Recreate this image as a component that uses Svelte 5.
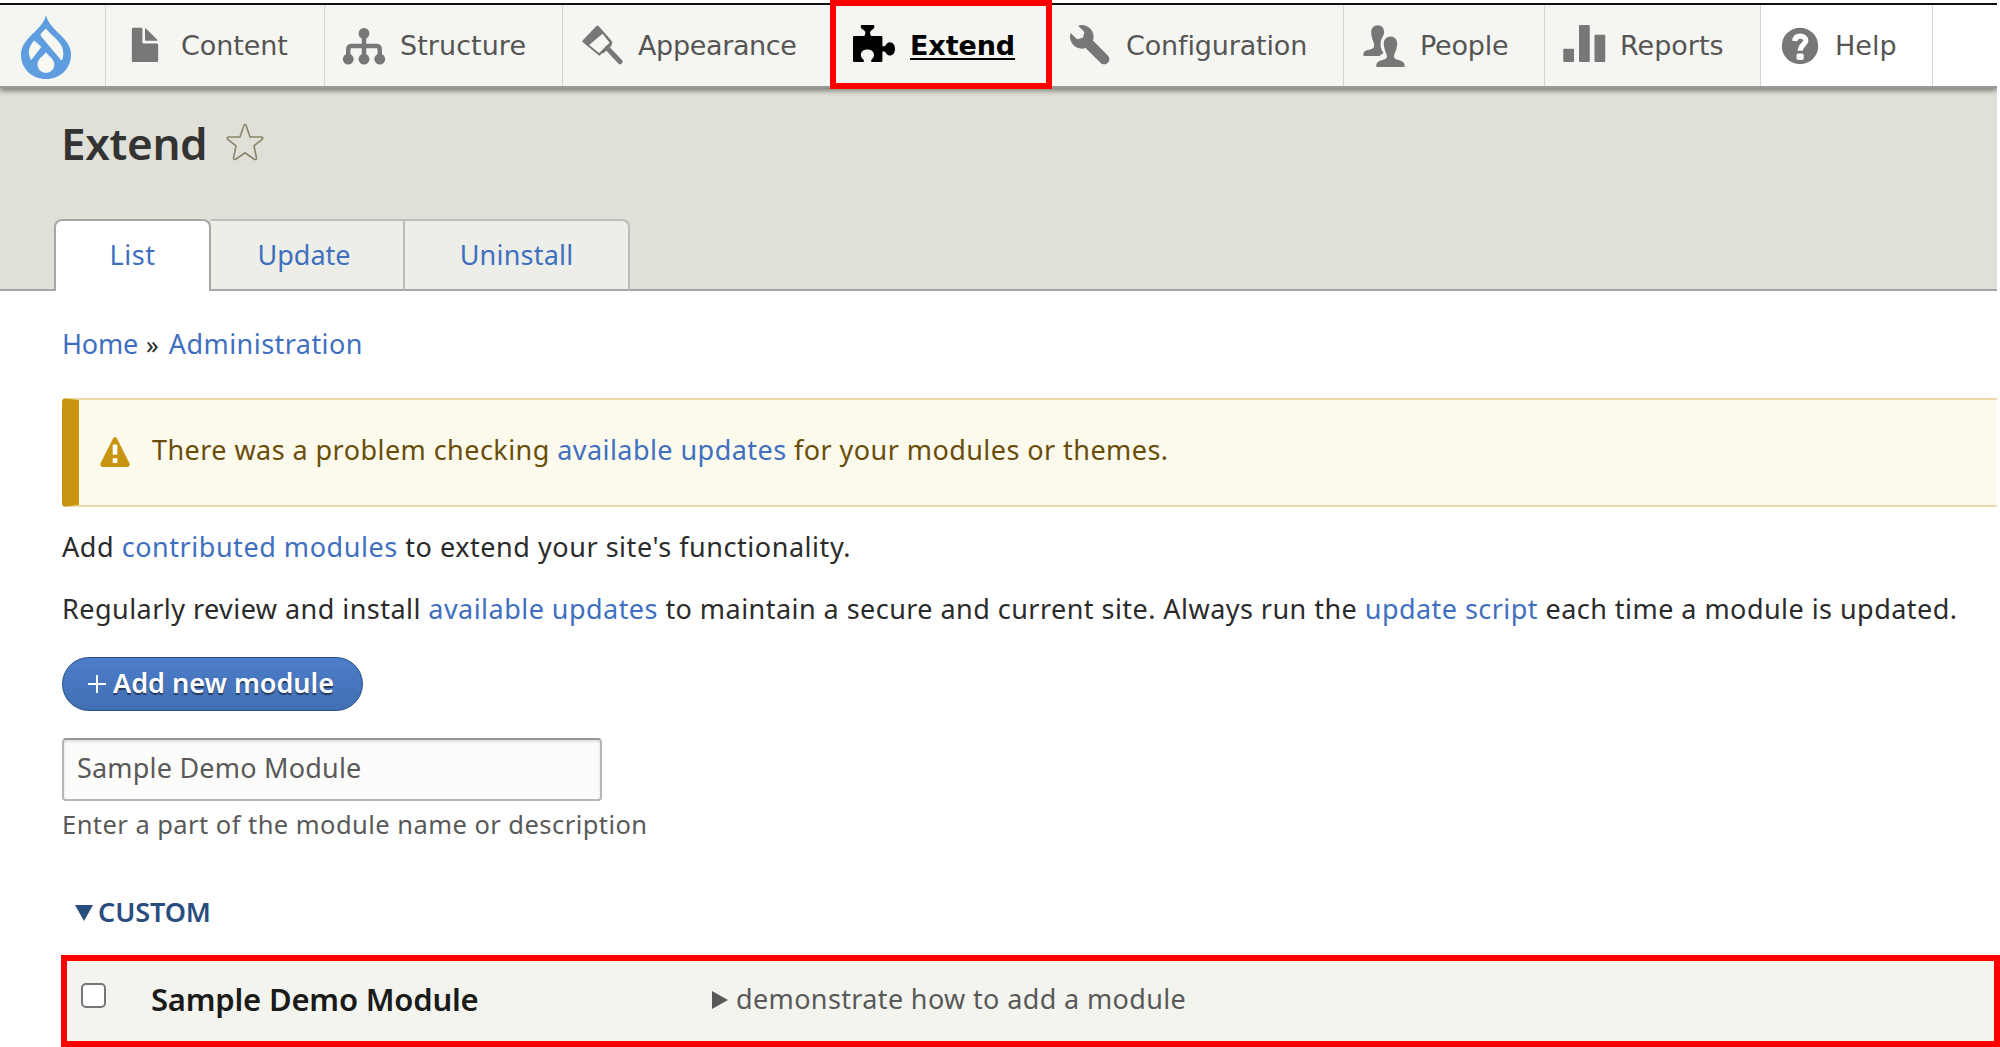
<script>
  const menu = [
    { id: 'content', label: 'Content' },
    { id: 'structure', label: 'Structure' },
    { id: 'appearance', label: 'Appearance' },
    { id: 'extend', label: 'Extend' },
    { id: 'config', label: 'Configuration' },
    { id: 'people', label: 'People' },
    { id: 'reports', label: 'Reports' },
    { id: 'help', label: 'Help' }
  ];
  let filter = $state('Sample Demo Module');
</script>

{#snippet icon(id)}
  <svg class="icon" viewBox="0 0 16 16">
    {#if id === 'content'}
      <path d="M12.502 7h-5c-.276 0-.502-.225-.502-.5v-5c0-.275-.225-.5-.5-.5h-3c-.275 0-.5.225-.5.5v12.1c0 .275.225.5.5.5h9c.275 0 .5-.225.5-.5v-6.1c0-.275-.225-.5-.498-.5zM8.502 6h4c.275 0 .34-.159.146-.354l-4.293-4.292c-.195-.195-.353-.129-.353.146v4c-.001.275.224.5.5.5z" />
    {:else if id === 'structure'}
      <circle cx="8" cy="3.2" r="2.05" />
      <circle cx="2" cy="13" r="2.05" /><circle cx="8" cy="13" r="2.05" /><circle cx="14" cy="13" r="2.05" />
      <path class="line" d="M8 4v9M2 13V9.300Q2 8 3.300 8h9.400Q14 8 14 9.300V13" />
    {:else if id === 'appearance'}
      <path fill-rule="evenodd" d="M5.900.4q.4-.4.8 0L11.700 6.100q.4.500.1 1.100L11.500 8 8.700 10.700l-.8.2-.6.600q-.3.200-.6 0L.6 6.500q-.3-.3 0-.6zM8.200 3.300 3.100 7.600l3.800 3.100 4-3.900z" />
      <path class="line" d="M10 8.800 14.900 14" />
    {:else if id === 'extend'}
      <path d="M3.300 0h4.500q.5.200.3.900C8 1.800 6.700 1.900 6.500 2.900q0 1 .5 1.300h3.700q.5 0 .5.500v3.400h.9c.4-.1.600-1.400 1.800-1.500 1.400 0 2.100 1.100 2.100 2.500s-.7 2.500-2.100 2.500c-1.200-.1-1.400-1.400-1.900-1.500h-.8v3.500q0 .500-.5.500H7.300q-.5 0-.4-.5c.1-.7 1.100-1 1.100-2.200 0-1.300-1-2.100-2.500-2.100S3 10.100 3 11.400c0 1.200 1.100 1.500 1.200 2.200q0 .500-.5.500H.5q-.5 0-.5-.5V4.700q0-.5.500-.5h3.700q.5-.3.500-1.300C4.600 1.900 3.200 1.800 3 .9 2.900.2 3 .1 3.300 0z" />
    {:else if id === 'config'}
      <path d="M14.416 11.586l-.01-.009-5.656-5.656c.15-.449.252-.921.252-1.421 0-2.485-2.016-4.500-4.502-4.500-.505 0-.981.102-1.434.255l2.431 2.431-.588 2.196-2.196.588-2.445-2.445c-.162.464-.268.956-.268 1.475 0 2.486 2.014 4.500 4.500 4.500.5 0 .972-.102 1.421-.251l5.667 5.665c.781.781 2.047.781 2.828 0s.781-2.047 0-2.828z" />
    {:else if id === 'people'}
      <path d="M6 .1c1.500 0 2.400 1.100 2.400 2.500 0 .8-.1 1.100-.4 1.600-.6 1-1 2.200-.9 3.500 0 1 .3 1.800.9 2.600q.3.600-.3.800l-.8.2.1.500H.9q-.5 0-.4-.6C.6 9.200 3.500 9.700 4.300 8.800 5.400 7.500 3.500 5.700 3.500 2.800 3.500 1.200 4.500.1 6 .1z" />
      <path d="M10.900 4.400c1.500 0 2.500 1.100 2.500 2.700 0 2.800-1.800 4.300-1 5.500.6 1 3.800.6 3.900 2.900q0 .5-.5.500H5.900q-.5 0-.5-.5c.1-2.300 3.300-1.900 3.900-2.900.8-1.200-1-2.700-1-5.500 0-1.600 1.100-2.700 2.600-2.700z" />
    {:else if id === 'reports'}
      <rect x=".1" y="9" width="4.100" height="5.100" rx=".4" />
      <rect x="6.100" y="0" width="4.100" height="14.100" rx=".4" />
      <rect x="12" y="3.700" width="4.100" height="10.400" rx=".4" />
    {:else}
      <circle cx="8" cy="8" r="6.950" />
      <path class="mark" d="M6 6.100C6.100 4.800 7 4.200 8.100 4.200S10.200 4.900 10.200 6 8.100 7.800 8.100 9.800" />
      <rect class="dot" x="6.700" y="10.900" width="2.700" height="2.400" rx=".6" />
    {/if}
  </svg>
{/snippet}

<div class="page">
  <nav class="toolbar">
    <a class="home" href="#home" aria-label="Home">
      <svg viewBox="0 0 50 64">
        <path class="drop" d="M25 0C23.500 8 16 14.500 10 20.500 4 26.500 0 32 0 39.500 0 54 11 64 25 64s25-10 25-24.500c0-7.500-4-13-10-19C34 14.500 26.500 8 25 0z" />
        <path class="cut" d="M25.300 14Q24.800 13.400 24 14.200L20 18.600Q19.100 20 20 21.200L39.300 44.200Q41 46.200 41.500 44C43.300 38 42.500 32 37 26 33.500 22 29 18.500 25.300 14zM13.300 25.600 20.300 32 11.300 43.800Q10.200 45.700 9.300 43.500C6.500 37.500 8 31 13.300 25.600zM25 37.200C22 41.200 16.400 44 16.400 49.600a8.500 8.300 0 0 0 17 0C33.400 44 27.700 41.200 25 37.200z" />
      </svg>
    </a>
    {#each menu as item}
      <a class="item {item.id}" href="#{item.id}">{@render icon(item.id)}<span>{item.label}</span></a>
    {/each}
  </nav>

  <header>
    <div class="heading">
      <h1>Extend</h1>
      <svg class="star" viewBox="0 0 38 38"><path d="M19 1.500q.9 0 1.400 1.800L24 14h11.500q2.300.6.600 2.400L28 22.800l2.500 12q.1 2.500-2.200 1.400L19 29.800l-9.300 6.400q-2.300 1.100-2.200-1.400l2.500-12L1.900 16.400Q.2 14.600 2.500 14H14l3.600-10.700Q18.100 1.500 19 1.500z" /></svg>
    </div>
    <div class="tabs">
      <a class="tab active" href="#list">List</a>
      <a class="tab update" href="#update">Update</a>
      <a class="tab uninstall" href="#uninstall">Uninstall</a>
    </div>
  </header>

  <main>
    <div class="crumbs"><a href="#home">Home</a><i>»</i><a class="admin" href="#admin">Administration</a></div>

    <div class="warning">
      <svg viewBox="0 0 30 30"><path d="M15 0q1.200 0 2 1.500L29.300 26Q30.700 29.500 27.500 30h-25Q-.7 29.500.7 26L13 1.500Q13.800 0 15 0z" /><path class="bang" d="M12.700 7.500h4.600v10.200h-4.600zM12.700 21.200h4.600v4.800h-4.600z" /></svg>
      <p>There was a problem checking <a href="#updates">available updates</a> for your modules or themes.</p>
    </div>

    <p class="intro">Add <a href="#contrib">contributed modules</a> to extend your site's functionality.</p>
    <p class="review">Regularly review and install <a href="#updates">available updates</a> to maintain a secure and current site. Always run the <a href="#script">update script</a> each time a module is updated.</p>

    <a class="add" href="#add"><svg viewBox="0 0 20 20"><path d="M10 1v18M1 10h18" /></svg>Add new module</a>

    <input type="text" bind:value={filter} aria-label="Filter modules" />
    <p class="hint">Enter a part of the module name or description</p>

    <div class="group"><svg viewBox="0 0 18 16"><path d="M0 0h18L9 16z" /></svg>CUSTOM</div>

    <div class="module">
      <span class="check"></span>
      <strong>Sample Demo Module</strong>
      <svg viewBox="0 0 16 18"><path d="M0 0 16 9 0 18z" /></svg>
      <span class="desc">demonstrate how to add a module</span>
    </div>
  </main>
</div>

<style>
  :global(body) { background: #fff; overflow: hidden; }
  .page {
    width: 2000px; height: 1047px; padding-top: 3px; overflow: hidden; background: #fff;
    font: 27px/40px "Noto Sans", "Open Sans", sans-serif; color: #2b2b2b;
  }
  * { box-sizing: border-box; }
  a { color: #3f6fbf; text-decoration: none; }
  p { margin: 0; white-space: nowrap; }

  .toolbar {
    position: relative; display: flex; width: 1997px; height: 83px; z-index: 1;
    border-top: 2px solid #111; background: #fff;
    box-shadow: 0 2px 1px #999a97, 0 5px 5px rgba(0, 0, 0, .42);
    clip-path: inset(-3px 0 -20px 0);
  }
  .home {
    width: 106px; padding: 10px 0 0 21px; background: #f5f6f1; border-right: 1px solid #d5d6d6;
  }
  .home svg { display: block; width: 50px; height: 64px; }
  .drop { fill: #5e9ee0; }
  .cut { fill: #f8f8f3; }
  .item {
    display: flex; align-items: center; padding-left: 18px; gap: 15px;
    background: #f5f6f1; border-right: 1px solid #d5d6d6; color: #555;
    font: 27px/40px "DejaVu Sans", sans-serif; white-space: nowrap;
  }
  .icon { flex: none; width: 42px; height: 42px; fill: #777; overflow: visible; }
  .line { fill: none; stroke: #777; stroke-width: 1.9; stroke-linecap: round; }
  .structure .line { stroke-width: 1.7; }
  .mark { fill: none; stroke: #fff; stroke-width: 2; }
  .dot { fill: #fff; }
  .content { width: 219px; letter-spacing: -.1px; }
  .structure { width: 238px; letter-spacing: .05px; }
  .appearance { width: 268px; border-right: 0; letter-spacing: -.35px; }
  .extend {
    width: 222px; margin: -5px 0 -3px -1px; border: 6px solid #f00;
    color: #000; font-weight: bold; letter-spacing: -.1px;
  }
  .extend .icon { fill: #000; }
  .extend span { text-decoration: underline; text-decoration-thickness: 2px; text-underline-offset: 3px; }
  .config { width: 292px; gap: 14px; letter-spacing: -.15px; }
  .people { width: 201px; gap: 16px; letter-spacing: -.2px; }
  .reports { width: 216px; }
  .help { width: 172px; gap: 14px; background: #fff; }
  .extend.item { padding: 2px 0 0 17px; }

  header {
    display: flex; flex-direction: column; justify-content: space-between;
    width: 1997px; height: 205px; padding: 32px 0 0 54px;
    background: #e0e0d8; border-bottom: 2px solid #a6a6a6;
  }
  .heading { display: flex; align-items: center; gap: 19px; padding-left: 7px; height: 50px; }
  h1 { margin: 0; font-size: 44px; line-height: 50px; font-weight: 600; letter-spacing: -.35px; color: #333; }
  .star { width: 38px; height: 38px; margin-top: -2px; fill: none; stroke: #86866b; stroke-width: 1.600; }
  .tabs { display: flex; height: 72px; margin-bottom: -2px; }
  .tab {
    display: flex; align-items: center; justify-content: center;
    background: #edeee8; border: 2px solid #bcbcba; border-left: 0; border-bottom-color: #a6a6a6;
  }
  .active { width: 157px; background: #fff; border: 2px solid #a6a6a6; border-bottom: 0; border-radius: 8px 8px 0 0; padding-bottom: 2px; letter-spacing: .6px; }
  .update { width: 194px; padding-right: 6px; }
  .uninstall { width: 225px; border-top-right-radius: 8px; letter-spacing: .2px; }

  main { display: flex; flex-direction: column; align-items: flex-start; padding: 33px 0 0 62px; }
  .crumbs { display: flex; gap: 8px; }
  .crumbs a:first-child { letter-spacing: -.2px; }
  .crumbs i { font-style: normal; font-size: 25px; }
  .admin { margin-left: 2px; letter-spacing: .45px; }
  .warning {
    display: flex; align-items: center; gap: 22px; width: 1935px; height: 109px; margin-top: 34px;
    padding: 0 0 6px 21px; background: #fcf9ed; color: #694d08; letter-spacing: .44px;
    border: 2px solid #edd8a8; border-left: 17px solid #c99410; border-right: 0; border-radius: 4px 0 0 4px;
  }
  .warning svg { width: 30px; height: 30px; margin-top: 4px; fill: #c99410; }
  .bang { fill: #fff; }
  .intro { margin-top: 20px; letter-spacing: .54px; }
  .review { margin-top: 22px; letter-spacing: .455px; }
  .add {
    display: flex; align-items: center; gap: 6px; width: 301px; height: 54px; margin-top: 28px;
    padding: 0 0 3px 24px; border: 1px solid #274f87; border-radius: 27px;
    background: linear-gradient(#4d7dca, #426fb3); color: #fff; font-weight: 600;
    text-shadow: 0 2px 1px rgba(0, 0, 0, .5); white-space: nowrap;
  }
  .add svg { width: 20px; height: 20px; margin-top: 3px; fill: none; stroke: #fff; stroke-width: 2; overflow: visible; }
  input {
    width: 540px; height: 63px; margin: 27px 0 0; padding: 0 13px 5px; outline: 0;
    border: 2px solid #b5b5b3; border-top-color: #969694; border-radius: 4px;
    background: #fcfcfa; box-shadow: inset 0 2px 3px rgba(0, 0, 0, .12);
    color: #595959; font: 27px "Noto Sans", sans-serif; letter-spacing: .2px;
  }
  .hint { margin-top: 3px; font-size: 25.5px; letter-spacing: .45px; color: #595959; }
  .group { display: flex; align-items: center; gap: 5px; margin-top: 48px; padding-left: 13px; color: #2a4d80; font-weight: 600; letter-spacing: -.1px; }
  .group svg { width: 18px; height: 16px; margin-top: 1px; fill: #2a4d80; }
  .module {
    display: flex; align-items: center; width: 1939px; height: 92px; margin: 23px 0 0 -1px;
    padding: 0 0 5px 14px; border: 6px solid #f00; background: #f3f4ee;
  }
  .check { width: 25px; height: 25px; margin-top: -7px; border: 2px solid #767676; border-radius: 5px; background: #fff; }
  strong { width: 561px; margin-left: 45px; font-size: 31px; font-weight: 600; letter-spacing: -.2px; color: #1a1a1a; }
  .module svg { width: 16px; height: 18px; margin-top: 2px; fill: #595959; }
  .desc { margin-left: 8px; color: #595959; letter-spacing: .36px; }
</style>
